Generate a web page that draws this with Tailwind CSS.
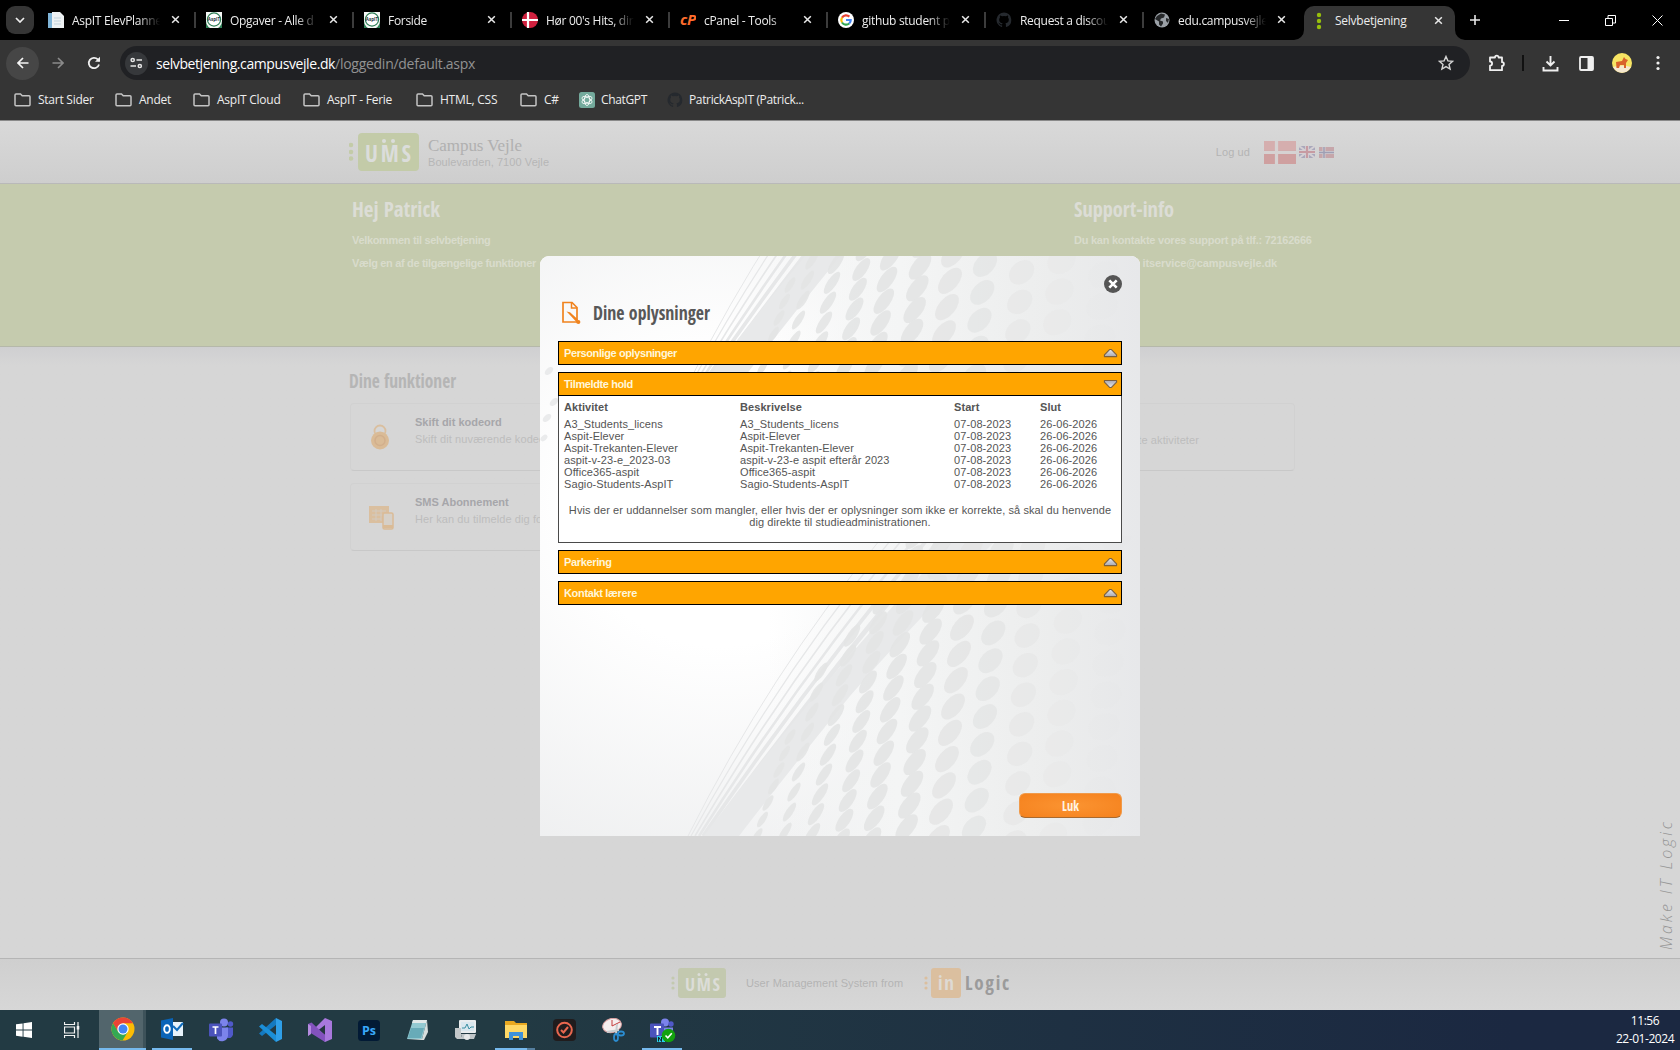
<!DOCTYPE html>
<html lang="da">
<head>
<meta charset="utf-8">
<title>Selvbetjening</title>
<script src="https://cdn.jsdelivr.net/npm/@tailwindcss/browser@4"></script>
</head>
<body class="w-[1680px] h-[1050px] overflow-hidden bg-black font-['Liberation_Sans',sans-serif] text-[11px]">
<svg class="absolute size-0">
  <defs>
    <symbol id="x" viewBox="0 0 10 10"><path d="M1.3 1.3 8.7 8.7M8.7 1.3 1.3 8.7" stroke="#e8e8e8" stroke-width="1.7" fill="none"/></symbol>
    <symbol id="folder" viewBox="0 0 17 14"><path d="M1 11.5v-9.500a1 1 0 0 1 1-1h4.500l1.700 1.800H15a1 1 0 0 1 1 1v7.900a1 1 0 0 1-1 1H2a1 1 0 0 1-1-1z" fill="none" stroke="#c4c4c4" stroke-width="1.500"/></symbol>
    <symbol id="gh" viewBox="0 0 16 16"><path fill="#25292e" d="M8 .5a7.500 7.500 0 0 0-2.400 14.600c.4.1.5-.2.500-.4v-1.400c-2.100.5-2.500-1-2.500-1-.4-.9-.9-1.100-.9-1.100-.7-.5 0-.5 0-.5.8.1 1.200.8 1.200.8.7 1.200 1.800.9 2.200.7.1-.5.300-.9.500-1.100-1.700-.2-3.400-.8-3.400-3.700 0-.8.3-1.500.8-2-.1-.2-.4-1 .1-2 0 0 .6-.2 2 .8a7 7 0 0 1 3.800 0c1.400-1 2-.8 2-.8.5 1 .2 1.800.1 2 .5.5.8 1.200.8 2 0 2.900-1.700 3.500-3.400 3.700.3.200.5.700.5 1.400v2.100c0 .2.100.5.500.4A7.500 7.500 0 0 0 8 .5z"/></symbol>
    <symbol id="asp" viewBox="0 0 16 16"><rect width="16" height="16" fill="#f5f7f5"/><path d="M0 9v7h16V9a8 8 0 0 1-16 0z" fill="#2e7d55"/><circle cx="8" cy="7.500" r="6.600" fill="#fff" stroke="#2e7d55" stroke-width="1.200"/><text x="8" y="9.300" font-size="4.500" font-weight="bold" text-anchor="middle" letter-spacing="0" fill="#234">AspIT</text></symbol>
    <linearGradient id="steel" x2="0" y2="1"><stop stop-color="#e6e6ea"/><stop offset="1" stop-color="#a9a9b2"/></linearGradient>
    <symbol id="tri" viewBox="0 0 16 10"><path d="M7 1.300h2L14.500 7v1.800h-13V7z" fill="url(#steel)" stroke="#7a6040" stroke-width="1.200" stroke-linejoin="round"/></symbol>
    <linearGradient id="bg2" x1="0" x2="1"><stop offset=".38" stop-color="#f4f5f5" stop-opacity="0"/><stop offset=".6" stop-color="#f4f5f5"/><stop offset=".85" stop-color="#eceded"/><stop offset="1" stop-color="#e7e8ea"/></linearGradient>
    <radialGradient id="bg1" cx=".3" cy=".42" r=".72"><stop offset=".35" stop-color="#fff"/><stop offset="1" stop-color="#ecedee"/></radialGradient>
  </defs>
</svg>

<!-- Browser chrome -->
<header class="w-full h-[121px] bg-[#353535] text-[12px] tracking-[-0.25px] text-[#ededed] font-['Open_Sans',sans-serif] border-b border-[#8a8a8a]">
  <div class="h-[40px] bg-black flex items-stretch">
    <div class="w-[38px] shrink-0 pl-[6px] pt-[6px]"><div class="size-[28px] rounded-[9px] bg-[#353535] flex items-center justify-center"><svg width="10" height="6" viewBox="0 0 10 6"><path d="M1 1l4 4 4-4" fill="none" stroke="#eee" stroke-width="1.700"/></svg></div></div>
    <nav id="tabs" class="flex"></nav>
    <div class="relative w-[151px] ml-[2px] mt-[6px] h-[34px] rounded-t-[10px] bg-[#353535] flex items-center pl-[12px] pb-[5px]">
      <svg class="absolute bottom-0 -left-[10px]" width="10" height="10"><path d="M10 0v10H0A10 10 0 0 0 10 0z" fill="#353535"/></svg>
      <svg class="absolute bottom-0 -right-[10px]" width="10" height="10"><path d="M0 0v10h10A10 10 0 0 1 0 0z" fill="#353535"/></svg>
      <svg width="6" height="18" viewBox="0 0 6 18"><g fill="#97bf0d"><circle cx="3" cy="3" r="2.200"/><circle cx="3" cy="9" r="2.200"/><circle cx="3" cy="15" r="2.200"/></g></svg>
      <span class="ml-[13px] w-[95px] mt-px">Selvbetjening</span>
      <svg class="size-[9px] ml-[4px]"><use href="#x"/></svg>
    </div>
    <svg class="ml-[14px] mt-[14px] size-[12px]" viewBox="0 0 12 12"><path d="M6 1v10M1 6h10" stroke="#e8e8e8" stroke-width="1.600"/></svg>
    <div class="ml-auto flex items-center gap-[36px] pr-[17px]">
      <svg width="10" height="10"><path d="M0 5.500h10" stroke="#fff"/></svg>
      <svg width="11" height="11"><path d="M.5 3.500h7v7h-7zM3 3V.5h7.500V8H8" fill="none" stroke="#fff"/></svg>
      <svg width="11" height="11"><path d="M.5.5l10 10m0-10l-10 10" stroke="#fff"/></svg>
    </div>
  </div>
  <div class="h-[46px] flex items-center">
    <div class="ml-[6px] size-[33px] rounded-full bg-[#464646] flex items-center justify-center"><svg width="12" height="12" viewBox="0 0 12 12"><path d="M11.500 6H1.500M6 1 1 6l5 5" fill="none" stroke="#f5f5f5" stroke-width="1.700"/></svg></div>
    <svg class="ml-[13px]" width="12" height="12" viewBox="0 0 12 12"><path d="M.5 6h10M6 1l5 5-5 5" fill="none" stroke="#8a8a8a" stroke-width="1.600"/></svg>
    <svg class="ml-[23px]" width="14" height="14" viewBox="0 0 14 14"><path d="M12 8.500A5.200 5.200 0 1 1 10.800 3.400L12.300 5" fill="none" stroke="#f0f0f0" stroke-width="1.800"/><path d="M13 .8v5H8z" fill="#f0f0f0"/></svg>
    <div class="ml-[19px] w-[1350px] h-[34px] rounded-full bg-[#202124] flex items-center pl-[5px] pr-[16px] text-[14px] tracking-[-0.41px]">
      <div class="size-[23px] rounded-full bg-[#36383b] flex items-center justify-center"><svg width="13" height="12" viewBox="0 0 13 12"><g fill="none" stroke="#e6e6e6" stroke-width="1.500"><circle cx="2.700" cy="3" r="1.600"/><path d="M6.500 3H12M.5 9H6"/><circle cx="9.800" cy="9" r="1.600"/></g></svg></div>
      <span class="ml-[8px] text-white">selvbetjening.campusvejle.dk</span><span class="text-[#929292] tracking-[-0.27px]">/loggedin/default.aspx</span>
      <svg class="ml-auto" width="16" height="16" viewBox="0 0 16 16"><path d="M8 1.500l1.900 4.400 4.700.4-3.600 3.100 1.100 4.700L8 11.600l-4.100 2.500L5 9.400 1.400 6.300l4.700-.4z" fill="none" stroke="#d5d5d5" stroke-width="1.400"/></svg>
    </div>
    <svg class="ml-[18px]" width="18" height="18" viewBox="0 0 18 18"><path d="M2 3.500h5a1.800 1.800 0 0 1 3.600 0H14v4.700a1.900 1.900 0 0 1 0 3.800v4.200H2v-4.500a2.100 2.100 0 0 0 0-4.200z" fill="none" stroke="#f0f0f0" stroke-width="1.800" stroke-linejoin="round"/></svg>
    <div class="ml-[16px] w-[2px] h-[16px] bg-[#111]"></div>
    <svg class="ml-[18px]" width="17" height="17" viewBox="0 0 17 17"><path d="M8.500 1v9M4.500 6.500l4 4 4-4M1.500 12v3.500h14V12" fill="none" stroke="#f0f0f0" stroke-width="1.900"/></svg>
    <svg class="ml-[20px]" width="15" height="15" viewBox="0 0 15 15"><rect x="1" y="1" width="13" height="13" rx="1" fill="none" stroke="#f0f0f0" stroke-width="1.800"/><path d="M8.500 1H14v13H8.500z" fill="#f0f0f0"/></svg>
    <svg class="ml-[18px]" width="20" height="20" viewBox="0 0 20 20"><circle cx="10" cy="10" r="10" fill="#f7e463"/><path d="M1 14q9-3 18 0a10 10 0 0 1-18 0z" fill="#f6e8d0"/><path d="M4 9l6-1 2-4 1.500 2L16 7l-2 3v5h-2v-3H8l-1 3H4.500z" fill="#d9622b"/></svg>
    <svg class="ml-[24px]" width="4" height="16"><g fill="#f0f0f0"><circle cx="2" cy="2.500" r="1.600"/><circle cx="2" cy="8" r="1.600"/><circle cx="2" cy="13.500" r="1.600"/></g></svg>
  </div>
  <div id="marks" class="h-[28px] flex items-center pl-[14px]"></div>
</header>

<main class="relative w-full h-[889px] bg-[#d6d6d6] overflow-hidden">
  <!-- Page header -->
  <div class="h-[63px] border-b border-[#b9b9b9] bg-linear-to-b from-[#d9d9d9] to-[#cecece] pl-[349px] pr-[346px] flex items-center text-[#b9b9b9] font-bold">
    <svg width="72" height="40" viewBox="0 0 72 40"><g fill="#c3cba8"><circle cx="2" cy="13" r="2.300"/><circle cx="2" cy="20" r="2.300"/><circle cx="2" cy="26.500" r="2.300"/><rect x="9" y="1" width="61" height="38" rx="4"/></g><text x="16" y="30" textLength="46" font-size="23" font-weight="bold" font-family="Open Sans Condensed, sans-serif" fill="#dbdddb">UMS</text><g fill="#dbdddb"><circle cx="35" cy="9" r="2"/><circle cx="44" cy="9" r="2"/></g></svg>
    <svg class="ml-[6px]" width="126" height="40"><text x="1" y="19" textLength="94" font-family="Liberation Serif, serif" font-size="17" font-weight="400" fill="#b0b0b0">Campus Vejle</text><text x="1" y="34" textLength="121" font-weight="400" fill="#b6b6b6">Boulevarden, 7100 Vejle</text></svg>
    <span class="ml-auto text-[#b4b4b4] font-normal tracking-[0.1px]">Log ud</span>
    <svg class="ml-[14px]" width="32" height="23"><path d="M0 0h32v23H0z" fill="#cfa0a0"/><path d="M0 0h32v9H0z" fill="#d5aeae"/><path d="M12.500 0v23M0 11.300h32" stroke="#d6d2d2" stroke-width="3.200"/></svg>
    <svg class="ml-[3px]" width="16" height="12"><path d="M0 0h16v12H0z" fill="#a9a8bb"/><path d="M0 0l16 12M16 0 0 12" stroke="#d4d0d4" stroke-width="2"/><path d="M8 0v12M0 6h16" stroke="#d4d0d4" stroke-width="4"/><path d="M8 0v12M0 6h16" stroke="#c79ba2" stroke-width="2.200"/></svg>
    <svg class="ml-[4px]" width="15" height="11"><path d="M0 0h15v11H0z" fill="#c6a6aa"/><path d="M5 0v11M0 5.500h15" stroke="#d0ccd0" stroke-width="3"/><path d="M5 0v11M0 5.500h15" stroke="#9f9fb4" stroke-width="1.500"/></svg>
  </div>
  <!-- Welcome band -->
  <section class="h-[163px] bg-[#c5cbae] border-b border-[#b5b8aa] pl-[352px] pr-[280px] flex justify-between font-bold text-[#d9dccc] tracking-[-0.33px]">
    <div class="pt-[11px]">
      <svg width="140" height="32"><text x="0" y="22" textLength="88" lengthAdjust="spacingAndGlyphs" font-size="22" letter-spacing="0" font-family="Open Sans Condensed, sans-serif" fill="#dcddd6">Hej Patrick</text></svg>
      <p class="mt-[6px] leading-[14px]">Velkommen til selvbetjening</p>
      <p class="mt-[9px] leading-[14px]">Vælg en af de tilgængelige funktioner</p>
    </div>
    <div class="pt-[11px] w-[326px]">
      <svg width="140" height="32"><text x="0" y="22" textLength="100" lengthAdjust="spacingAndGlyphs" font-size="22" letter-spacing="0" font-family="Open Sans Condensed, sans-serif" fill="#dcddd6">Support-info</text></svg>
      <p class="mt-[6px] leading-[14px] tracking-[-0.25px] whitespace-pre">Du kan kontakte vores support på tlf.: 72162666</p>
      <p class="mt-[9px] leading-[14px] w-[203px] text-right tracking-[-0.12px]">mail itservice@campusvejle.dk</p>
    </div>
  </section>
  <!-- Function cards -->
  <section class="h-[611px] pt-[19px] pl-[349px] bg-linear-to-b from-[#cfcfd1] via-[#d6d6d6] via-3% to-[#d6d6d6]">
    <svg width="140" height="32"><text x="0" y="22" textLength="107" lengthAdjust="spacingAndGlyphs" font-size="20" font-weight="bold" font-family="Open Sans Condensed, sans-serif" fill="#b5b5b5">Dine funktioner</text></svg>
    <div class="mt-[5px] ml-px w-[945px] grid grid-cols-3 gap-x-[12px] gap-y-[12px]">
      <article class="h-[68px] rounded border border-[#d1d1d1] border-b-[#c8c8c8] flex items-center pl-[17px]">
        <svg width="24" height="26" viewBox="0 0 24 26"><circle cx="12" cy="7" r="5.500" fill="none" stroke="#dabf9f" stroke-width="1.800"/><circle cx="12" cy="16.500" r="9" fill="#dabb96"/><circle cx="12" cy="16.500" r="5" fill="none" stroke="#d2af8c" stroke-width="1.500"/></svg>
        <div class="ml-[23px] -mt-[12px] leading-[17px] whitespace-nowrap"><p class="font-bold text-[#a6a6aa]">Skift dit kodeord</p><p class="text-[#bdbdbd] tracking-[0.1px]">Skift dit nuværende kodeord</p></div>
      </article>
      <article class="h-[68px] rounded border border-[#d1d1d1]"></article>
      <article class="h-[68px] rounded border border-[#d1d1d1] border-b-[#c8c8c8] pt-[28px] pl-[138px] text-[#bdbdbd] leading-[17px] tracking-[0.1px]"><p class="w-[72px] text-right whitespace-nowrap">te aktiviteter</p></article>
      <article class="h-[68px] rounded border border-[#d1d1d1] border-b-[#c8c8c8] flex items-center pl-[17px]">
        <svg width="26" height="26" viewBox="0 0 26 26"><rect x="1" y="2" width="20" height="17" fill="#dabf9f"/><path d="M4 7h14M4 11h14M4 15h9M8 5v12M13 5v12" stroke="#d3cabf" stroke-width="1"/><rect x="15" y="9" width="10" height="16" rx="1.500" fill="#d6d0c8" stroke="#dabb96" stroke-width="1.500"/><path d="M15 21h10v3H15z" fill="#dabb96"/></svg>
        <div class="ml-[21px] -mt-[12px] leading-[17px] whitespace-nowrap"><p class="font-bold text-[#a6a6aa]">SMS Abonnement</p><p class="text-[#bdbdbd] tracking-[0.1px]">Her kan du tilmelde dig for</p></div>
      </article>
    </div>
  </section>
  <!-- Slogan on the right edge -->
  <svg class="absolute left-[1652px] top-[693px]" width="28" height="140"><text transform="translate(20 136) rotate(-90)" textLength="128" font-size="16" font-style="italic" font-family="Open Sans, sans-serif" font-weight="300" fill="#969696">Make IT Logic</text></svg>
  <footer class="h-[52px] border-t border-[#b5b5b5] bg-linear-to-b from-[#cfcfcf] to-[#d7d7d7] pl-[671px] pt-[8px] flex items-start">
    <svg width="56" height="32"><g fill="#c3c9af"><circle cx="2" cy="11" r="1.600"/><circle cx="2" cy="16" r="1.600"/><circle cx="2" cy="21" r="1.600"/><rect x="7" y="1" width="48" height="30" rx="3"/></g><text x="14" y="24" textLength="35" font-size="18" font-weight="bold" font-family="Open Sans Condensed, sans-serif" fill="#dcddd8">UMS</text><g fill="#dcddd8"><circle cx="28" cy="7.500" r="1.500"/><circle cx="35" cy="7.500" r="1.500"/></g></svg>
    <span class="ml-[19px] mt-[8px] w-[160px] whitespace-nowrap text-[#b4b4b4] tracking-[0.07px]">User Management System from</span>
    <svg class="ml-[18px]" width="88" height="34"><g fill="#dbbf9f"><circle cx="2" cy="11" r="1.600"/><circle cx="2" cy="16" r="1.600"/><circle cx="2" cy="21" r="1.600"/><rect x="7" y="1" width="30" height="30" rx="3"/></g><g font-family="Open Sans Condensed, sans-serif" font-weight="bold"><text x="14" y="23" textLength="16" font-size="19" fill="#dedad4">in</text><text x="41" y="23" textLength="44" font-size="19" fill="#9b9b9b">Logic</text></g></svg>
  </footer>

  <!-- Dialog -->
  <div class="absolute left-[540px] top-[135px] w-[600px] h-[580px] rounded-t-[9px] overflow-hidden bg-white">
    <svg class="absolute inset-0" width="600" height="580" id="art">
      <rect width="600" height="580" fill="url(#bg1)"/><rect width="600" height="580" fill="url(#bg2)"/>
      <defs><clipPath id="lo"><path d="M0 280h600v300H0z"/></clipPath><clipPath id="hi"><path d="M0 452h600v150H0z"/></clipPath>
        <g id="pat"></g></defs>
      <g clip-path="url(#lo)"><use href="#pat"/></g>
      <g transform="translate(0 -452)" clip-path="url(#hi)"><use href="#pat"/></g>
      <g fill="#eaebec"><ellipse cx="9" cy="115" rx="5" ry="3" transform="rotate(-40 9 115)"/><ellipse cx="14" cy="146" rx="5" ry="3" transform="rotate(-40 14 146)"/><ellipse cx="7" cy="162" rx="5" ry="3" transform="rotate(-40 7 162)"/><ellipse cx="4" cy="182" rx="4" ry="2.500" transform="rotate(-40 4 182)"/></g>
    </svg>
    <div class="relative h-full pl-[18px] pr-[18px] flex flex-col">
      <div class="h-[85px] flex">
        <svg class="mt-[44px] ml-[3px]" width="21" height="25" viewBox="0 0 21 25"><path d="M2 2.500h9l5 5V22H2z" fill="none" stroke="#f0831e" stroke-width="1.700"/><path d="M10.500 2.500V8H16" fill="none" stroke="#f0831e" stroke-width="1.500"/><path d="M5.500 11.500l3.500.8 8 7.200-2 2-7.500-8z" fill="#f0831e"/><circle cx="17.300" cy="22" r="2.100" fill="#f0831e"/></svg>
        <svg class="mt-[40px] ml-[11px]" width="130" height="34"><text x="0" y="24" textLength="117" lengthAdjust="spacingAndGlyphs" font-size="20" font-weight="bold" font-family="Open Sans Condensed, sans-serif" fill="#585858">Dine oplysninger</text></svg>
        <svg class="ml-auto mt-[19px]" width="18" height="18"><circle cx="9" cy="9" r="9" fill="#555"/><path d="M5.300 5.300l7.400 7.400m0-7.400l-7.400 7.400" stroke="#fff" stroke-width="2.600"/></svg>
      </div>
      <div class="h-[24px] border border-black bg-[#ffa500] flex items-center justify-between pl-[5px] pr-[3px] font-bold text-[#fff6da] tracking-[-0.4px]"><span>Personlige oplysninger</span><svg width="15" height="10"><use href="#tri"/></svg></div>
      <div class="mt-[7px] h-[24px] border border-black bg-[#ffa500] flex items-center justify-between pl-[5px] pr-[3px] font-bold text-[#fff6da] tracking-[-0.4px]"><span>Tilmeldte hold</span><svg class="rotate-180" width="15" height="10"><use href="#tri"/></svg></div>
      <div class="h-[147px] border border-t-0 border-[#4a4a4a] bg-white px-[5px] pt-[4px] text-[#555]">
        <div class="grid grid-cols-[176px_214px_86px_auto] font-bold leading-[14px] tracking-[0.07px]"><span>Aktivitet</span><span>Beskrivelse</span><span>Start</span><span>Slut</span></div>
        <div id="rows" class="mt-[4px] tracking-[0.09px]"></div>
        <p class="mt-[14px] text-center leading-[12px] tracking-[0.09px]">Hvis der er uddannelser som mangler, eller hvis der er oplysninger som ikke er korrekte, så skal du henvende<br>dig direkte til studieadministrationen.</p>
      </div>
      <div class="mt-[7px] h-[24px] border border-black bg-[#ffa500] flex items-center justify-between pl-[5px] pr-[3px] font-bold text-[#fff6da] tracking-[-0.35px]"><span>Parkering</span><svg width="15" height="10"><use href="#tri"/></svg></div>
      <div class="mt-[7px] h-[24px] border border-black bg-[#ffa500] flex items-center justify-between pl-[5px] pr-[3px] font-bold text-[#fff6da] tracking-[-0.33px]"><span>Kontakt lærere</span><svg width="15" height="10"><use href="#tri"/></svg></div>
      <button class="mt-auto mb-[18px] self-end w-[103px] h-[25px] rounded-[6px] border border-[#f09a4a] border-b-[#a86a30] bg-radial from-[#fb9431] to-[#f5811c] flex items-center justify-center"><svg width="20" height="20"><text x="1" y="15" textLength="17" lengthAdjust="spacingAndGlyphs" font-size="14" font-weight="bold" font-family="Open Sans Condensed, sans-serif" fill="#fff3e4">Luk</text></svg></button>
    </div>
  </div>
</main>

<!-- Taskbar -->
<div class="w-full h-[40px] flex bg-linear-to-r from-[#223a43] from-30% to-[#1b2841] to-90% font-['Open_Sans',sans-serif]">
  <div class="w-[48px] flex items-center justify-center"><svg width="16" height="16" viewBox="0 0 16 16"><path d="M0 2.300l6.600-.9v6.200H0zM7.500 1.200 16 0v7.600H7.500zM0 8.500h6.600v6.200L0 13.800zM7.500 8.500H16V16l-8.500-1.200z" fill="#fff"/></svg></div>
  <div class="w-[51px] flex items-center pl-[16px]"><svg width="16" height="16" viewBox="0 0 16 16"><path d="M.5 0v2.500h10V0M.5 16v-2.500h10V16M.5 5h10v6H.5zM14 0v16" fill="none" stroke="#f2f2f2" stroke-width="1.200"/><path d="M12.700 4h2.600v3.500h-2.600z" fill="#f2f2f2"/></svg></div>
  <div class="w-[44px] bg-[#52656c] border-b-2 border-[#76b9ed] flex items-center justify-center pl-[4px]">
    <svg width="24" height="24" viewBox="0 0 24 24"><circle cx="12" cy="12" r="11.500" fill="#fbbc04"/><path d="M2 6.300A11.500 11.500 0 0 1 22 6.300H12L7 15z" fill="#ea4335"/><path d="M2 6.300A11.500 11.500 0 0 0 11.500 23.500l5.500-9-5 3-5-3z" fill="#34a853"/><circle cx="12" cy="12" r="5.700" fill="#fff"/><circle cx="12" cy="12" r="4.500" fill="#4285f4"/></svg></div>
  <div class="w-[3px] bg-[#3d525a] border-b-2 border-[#76b9ed] mr-[6px]"></div>
  <div class="w-[40px] border-b-2 border-[#76b9ed] flex items-center justify-center">
    <svg width="23" height="22" viewBox="0 0 23 22"><path d="M10 4h12v14H10z" fill="#e8f3fb"/><path d="M12 8l4 4 6-7" fill="none" stroke="#0f6cbd" stroke-width="2"/><path d="M0 2.500 12 0v22L0 19.500z" fill="#0a64b8"/><ellipse cx="6" cy="11" rx="2.800" ry="3.800" fill="none" stroke="#fff" stroke-width="1.900"/></svg></div>
  <div class="ml-[5px] flex">
    <div class="w-[49px] flex items-center justify-center"><svg width="25" height="24" viewBox="0 0 25 24"><circle cx="15" cy="4.500" r="4" fill="#7b83eb"/><circle cx="21.500" cy="6" r="2.700" fill="#5059c9"/><path d="M17 9.500h7v7a4 4 0 0 1-6 3z" fill="#5059c9"/><path d="M8 9.500h11v8a6 6 0 0 1-11 3z" fill="#7b83eb"/><rect y="5.500" width="13" height="13" rx="1" fill="#4b53bc"/><path d="M3.500 9h6M6.500 9v7" stroke="#fff" stroke-width="1.700"/></svg></div>
    <div class="w-[49px] flex items-center justify-center"><svg width="25" height="24" viewBox="0 0 25 24"><path d="M18 0l6 3v18l-6 3z" fill="#2f9fe8"/><path d="M18 0v7L4 18l-3-2.500z" fill="#1479c0"/><path d="M18 24v-7L4 6 1 8.500z" fill="#1b8fd8"/></svg></div>
    <div class="w-[49px] flex items-center justify-center"><svg width="24" height="24" viewBox="0 0 24 24"><path d="M17 0l7 3v18l-7 3L5 12z" fill="#a878dc"/><path d="M17 7v10L10.500 12z" fill="#24353f"/><path d="M0 6l3.500-1.500L17 17v7L3.500 15.500 3 15v0L7 12 0 18z" fill="#8352bd"/><path d="M0 6l3 2v8l-3 2z" fill="#b58be0"/></svg></div>
    <div class="w-[49px] flex items-center justify-center"><svg width="22" height="21"><rect width="22" height="21" rx="3.500" fill="#021a35"/><text x="4" y="15" font-size="12.500" font-weight="bold" textLength="14" lengthAdjust="spacingAndGlyphs" fill="#39a8fb">Ps</text></svg></div>
    <div class="w-[49px] flex items-center justify-center"><svg width="23" height="22" viewBox="0 0 23 22"><path d="M7 1h14l-5 19H1z" fill="#93c9d1"/><path d="M7 1h14l-1 3H6z" fill="#e2e8e8"/><path d="M21 1l1 12-4 8H1l15-1z" fill="#d7dedd"/><path d="M5 9h13l-3 10H2z" fill="#68abb8"/></svg></div>
    <div class="w-[49px] flex items-center justify-center"><svg width="23" height="22" viewBox="0 0 23 22"><rect x="4" y="1" width="17" height="13" rx="1" fill="#e9ecee"/><rect x="6" y="3" width="13" height="9" fill="#d9e7ee"/><path d="M7 9h3l2-4 2 5 2-2h3" stroke="#3b8fa3" fill="none"/><path d="M0 9h6v8l3 3H2l-2-2z" fill="#c3c8ca"/><path d="M6 15h15l-2 5H7z" fill="#bfc5c8"/><circle cx="12" cy="18" r="3" fill="#e6e8e9"/></svg></div>
    <div class="w-[49px] flex items-center justify-center relative"><svg width="22" height="20" viewBox="0 0 22 20"><path d="M0 1h9l2 2h11v15H0z" fill="#e9a820"/><path d="M0 5h22v13H0z" fill="#ffd866"/><path d="M4 20v-8h14v8h-4v-4H8v4z" fill="#3f92da"/></svg><i class="absolute bottom-0 left-[4px] w-[32px] h-[2px] bg-[#76b9ed]"></i><i class="absolute bottom-0 left-[36px] w-[8px] h-[2px] bg-[#557f9f]"></i></div>
    <div class="w-[49px] flex items-center justify-center"><svg width="23" height="22"><rect width="23" height="22" rx="4" fill="#201c1d"/><circle cx="11.500" cy="11" r="7.300" fill="none" stroke="#e8674f" stroke-width="2"/><path d="M8 11l2.500 2.500L15 8" fill="none" stroke="#e8674f" stroke-width="2"/></svg></div>
    <div class="w-[49px] flex items-center justify-center"><svg width="23" height="24" viewBox="0 0 23 24"><ellipse cx="10" cy="7.500" rx="9.500" ry="7" fill="#f5eeee" stroke="#d9a0a0" transform="rotate(-15 10 7.500)"/><path d="M10 2v6l8-4" stroke="#c43c3c" fill="none"/><path d="M15 6l-1 10M5 14l12-2" stroke="#c8cdd0" stroke-width="2"/><g fill="none" stroke="#2b8cd0" stroke-width="1.800"><ellipse cx="14" cy="19.500" rx="2" ry="3.500"/><ellipse cx="19" cy="15.500" rx="3" ry="2"/></g></svg></div>
    <div class="w-[49px] flex items-center justify-center relative"><svg width="27" height="26" viewBox="0 0 27 26"><circle cx="16" cy="5.500" r="4" fill="#7b83eb"/><circle cx="22" cy="7" r="2.700" fill="#5059c9"/><path d="M9 10.500h15v9H9z" fill="#7b83eb"/><rect x="1" y="6.500" width="14" height="14" rx="1" fill="#4b53bc"/><path d="M5 10h7M8.500 10v8" stroke="#fff" stroke-width="1.900"/><path d="M8 19h8v6H8z" fill="#2ad1e8"/><path d="M9.500 24.500V20l3 4.500V20" fill="none" stroke="#12222b"/><circle cx="19.500" cy="18.500" r="6.800" fill="#13a10e"/><path d="M16.500 18.500l2.300 2.300 4-4.500" fill="none" stroke="#fff" stroke-width="1.600"/></svg><i class="absolute bottom-0 left-[4px] w-[40px] h-[2px] bg-[#76b9ed]"></i></div>
  </div>
  <div class="ml-auto mr-[4px] w-[62px] text-center text-white text-[12px] leading-[18px] pt-[2px] tracking-[-0.45px] whitespace-nowrap">11:56<br>22-01-2024</div>
</div>

<script>
const icons = {
  doc: '<path d="M0 1h11v15H0z" fill="#7fb4d8"/><path d="M4 0h8l4 4v12H4z" fill="#eef2f4"/><path d="M6 6h7M6 9h7M6 12h7" stroke="#c3d3dc"/>',
  asp: '<use href="#asp"/>',
  dk: '<circle cx="8" cy="8" r="8" fill="#d0213f"/><path d="M6 0v16M0 8h16" stroke="#fff" stroke-width="2.200"/>',
  cp: '<text x="0" y="13" font-size="15" font-weight="bold" font-style="italic" textLength="16" lengthAdjust="spacingAndGlyphs" fill="#ff6c2c">cP</text>',
  g: '<circle cx="8" cy="8" r="8" fill="#fff"/><g fill="none" stroke-width="2.200"><path d="M4 5.600A4.800 4.800 0 0 1 11.400 4.600" stroke="#ea4335"/><path d="M4 5.600a4.800 4.800 0 0 0 0 4.900" stroke="#fbbc05"/><path d="M4 10.500a4.800 4.800 0 0 0 7.200 1" stroke="#34a853"/><path d="M11.200 11.500A4.600 4.600 0 0 0 12.700 8H8" stroke="#4285f4"/></g>',
  gh: '<use href="#gh"/>',
  globe: '<circle cx="8" cy="8" r="7.500" fill="#9aa0a6"/><path d="M7 1.500l4 1-1 3-3 1-1 2 3 1v2l-2 3-2-2v-3L1 7l2-3z" fill="#26282a"/><path d="M12 6l3 1-1 4-2-2z" fill="#26282a"/>'
};
const tabs = [['doc','AspIT ElevPlanne'],['asp','Opgaver - Alle d'],['asp','Forside'],['dk',"Hør 00's Hits, dir"],['cp','cPanel - Tools'],['g','github student p'],['gh','Request a discou'],['globe','edu.campusvejle']];
document.getElementById('tabs').innerHTML = tabs.map(([i,t],n) =>
  `<div class="w-[158px] flex items-center pl-[10px] pb-px"><svg class="shrink-0 size-[16px]" viewBox="0 0 16 16">${icons[i]}</svg><span class="ml-[8px] mt-[2px] w-[88px] overflow-hidden whitespace-nowrap tracking-[-0.3px] mask-r-from-75% mask-r-to-100%">${t}</span><svg class="ml-[11px] shrink-0 size-[9px]"><use href="#x"/></svg>${n<7?'<i class="ml-[14px] w-[1.5px] h-[16px] bg-[#3c3c3c]"></i>':''}</div>`).join('');
const folder = '<svg class="w-[17px] h-[14px] shrink-0"><use href="#folder"/></svg>';
const marks = [['Start Sider',101],['Andet',78],['AspIT Cloud',110],['AspIT - Ferie',113],['HTML, CSS',104],['C#',60]];
document.getElementById('marks').innerHTML = marks.map(([t,w]) =>
  `<div class="flex items-center shrink-0 whitespace-nowrap" style="width:${w}px">${folder}<span class="ml-[7px]">${t}</span></div>`).join('') +
  `<svg class="size-[16px] -ml-px" viewBox="0 0 16 16"><rect width="16" height="16" rx="2.500" fill="#74aa9c"/><g fill="none" stroke="#fff" stroke-width=".8"><ellipse cx="8" cy="8" rx="2.700" ry="5.500"/><ellipse cx="8" cy="8" rx="2.700" ry="5.500" transform="rotate(60 8 8)"/><ellipse cx="8" cy="8" rx="2.700" ry="5.500" transform="rotate(120 8 8)"/></g></svg><span class="ml-[6px] tracking-[-0.35px]">ChatGPT</span>
   <svg class="ml-[20px] size-[16px]"><use href="#gh"/></svg><span class="ml-[6px] tracking-[-0.34px]">PatrickAspIT (Patrick...</span>`;
const rows = [['A3_Students_licens','A3_Students_licens'],['Aspit-Elever','Aspit-Elever'],['Aspit-Trekanten-Elever','Aspit-Trekanten-Elever'],['aspit-v-23-e_2023-03','aspit-v-23-e aspit efterår 2023'],['Office365-aspit','Office365-aspit'],['Sagio-Students-AspIT','Sagio-Students-AspIT']];
document.getElementById('rows').innerHTML = rows.map(([a,b]) =>
  `<div class="grid grid-cols-[176px_214px_86px_auto] leading-[12px]"><span>${a}</span><span>${b}</span><span>07-08-2023</span><span>26-06-2026</span></div>`).join('');

// Dialog artwork: swept lines, a solid band and columns of tilted dots
let p = '';
const from = [148,151,155,159,163,168], to = [339,350,361,373,386,399], w = [1,1.2,1.7,2.6,3.6,5];
from.forEach((f,i) => p += `<path d="M${f} 580Q${(f+to[i])/2-14+i*2} ${418+i*2} ${to[i]} 285" fill="none" stroke="#e6e7e8" stroke-width="${w[i]}"/>`);
p += '<path d="M164 580Q262 448 412 285L455 285Q362 380 310 440Q245 520 199 580z" fill="#e8e9ea"/>';
// x/y of first and last dot, count, long radius, short radius, tilt, opacity
[[768,803,757,836,3,9,3,57,.9],[803,752,785,832,5,11,3.5,57,.9],[836,715,812,834,7,13,4.500,56,.9],
 [868,682,841,840,9,13.500,5.500,55,.9],[903,623,871,840,11,15,6.500,54,.9],[936,588,904,849,13,15.500,7.500,52,.9],
 [968,575,938,838,11,15.500,8.500,50,.8],[996,605,974,828,9,14.500,9.500,47,.75],[1029,606,1016,813,8,14,10.500,42,.5],
 [1070,590,1055,805,8,15,12,35,.3],[1112,600,1100,790,7,16,13,25,.12]
].forEach(([x1,y1,x2,y2,n,a,b,t,o]) => {
  const dx=(x2-x1)/(n-1), dy=(y2-y1)/(n-1);
  for (let k=-4;k<n+2;k++) p += `<ellipse cx="0" cy="0" rx="${a}" ry="${b}" fill="#e3e4e4" opacity="${o}" transform="translate(${x1+dx*k-540} ${y1+dy*k-256}) rotate(${-t})"/>`;
});
document.getElementById('pat').innerHTML = p;
</script>
</body>
</html>
